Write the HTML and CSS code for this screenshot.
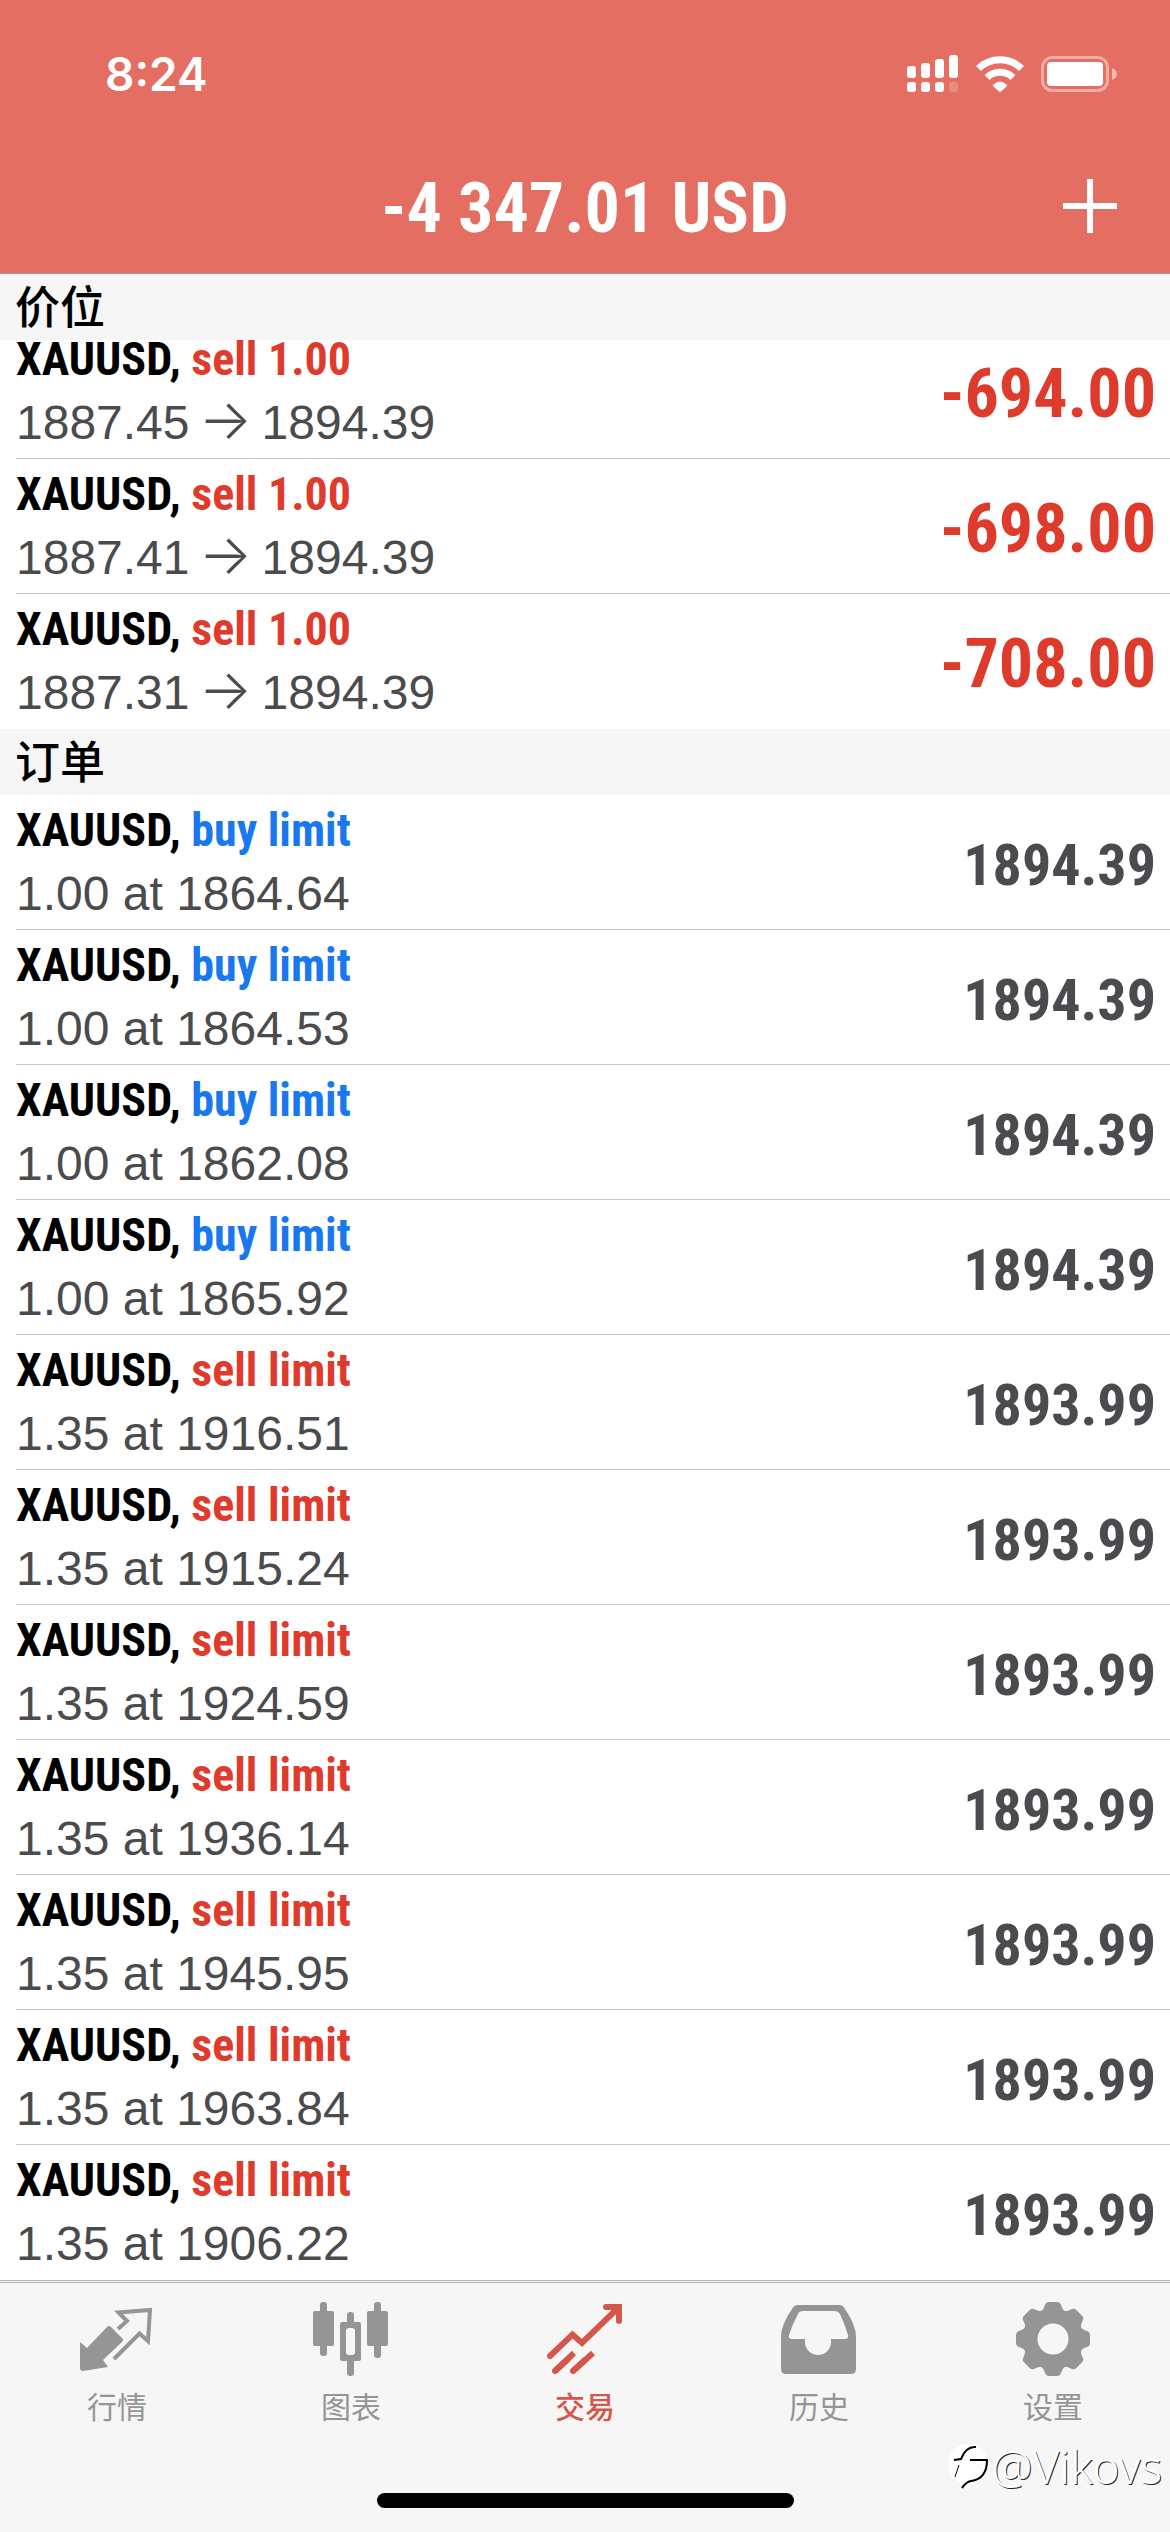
FILE: index.html
```html
<!DOCTYPE html>
<html lang="zh-CN">
<head>
<meta charset="utf-8">
<meta name="viewport" content="width=device-width">
<title>交易</title>
<link rel="stylesheet" href="styles.css">
</head>
<body>
<header class="top">
  <div class="status">
    <time class="clock">8:24</time>
    <div class="indicators">
      <svg class="signal" width="52" height="38" viewBox="0 0 52 38" fill="#fff" aria-hidden="true">
        <rect x="0" y="11" width="9" height="12" rx="3"/><rect x="14" y="8" width="9" height="15" rx="3"/><rect x="28" y="4" width="9" height="19" rx="3"/><rect x="42" y="0" width="9" height="23" rx="3"/>
        <rect x="0" y="27" width="9" height="10" rx="3"/><rect x="14" y="27" width="9" height="10" rx="3"/><rect x="28" y="27" width="9" height="10" rx="3"/><rect x="42" y="27" width="9" height="10" rx="3" opacity=".2"/>
      </svg>
      <svg class="wifi" width="50" height="38" viewBox="0 0 50 38" aria-hidden="true">
        <g fill="none" stroke="#fff" stroke-width="7"><path d="M3.500 13.500a31 31 0 0 1 43 0"/><path d="M12 22.500a19 19 0 0 1 26 0"/></g>
        <path fill="#fff" d="M18.500 29.500Q25 23.500 31.500 29.500Q32.500 30.500 31.500 31.500L26 36.500Q25 37.300 24 36.500L18.500 31.500Q17.500 30.500 18.500 29.500z"/>
      </svg>
      <svg class="battery" width="77" height="38" viewBox="0 0 77 38" aria-hidden="true">
        <rect x="1.500" y="2.500" width="65" height="33" rx="10" fill="none" stroke="#fff" stroke-width="3" opacity=".42"/>
        <rect x="6" y="7" width="56" height="24" rx="4" fill="#fff"/>
        <path d="M71 13q5 2 5 6t-5 6z" fill="#fff" opacity=".5"/>
      </svg>
    </div>
  </div>
  <div class="bar">
    <h1 class="balance">-4 347.01 USD</h1>
    <button class="add" type="button" aria-label="Add">
      <svg width="54" height="54" viewBox="0 0 54 54" stroke="#fff" stroke-width="6" aria-hidden="true"><path d="M27 0v54M0 27h54"/></svg>
    </button>
  </div>
</header>
<main class="content">
  <section>
    <h2 class="section-title">价位</h2>
    <ul class="list scrolled">
      <li class="row"><div class="order"><p class="name">XAUUSD, <span class="sell">sell 1.00</span></p><p class="detail">1887.45 <span class="arrow">→</span> 1894.39</p></div><strong class="profit">-694.00</strong></li>
      <li class="row"><div class="order"><p class="name">XAUUSD, <span class="sell">sell 1.00</span></p><p class="detail">1887.41 <span class="arrow">→</span> 1894.39</p></div><strong class="profit">-698.00</strong></li>
      <li class="row"><div class="order"><p class="name">XAUUSD, <span class="sell">sell 1.00</span></p><p class="detail">1887.31 <span class="arrow">→</span> 1894.39</p></div><strong class="profit">-708.00</strong></li>
    </ul>
  </section>
  <section>
    <h2 class="section-title">订单</h2>
    <ul class="list">
      <li class="row"><div class="order"><p class="name">XAUUSD, <span class="buy">buy limit</span></p><p class="detail">1.00 at 1864.64</p></div><strong class="price">1894.39</strong></li>
      <li class="row"><div class="order"><p class="name">XAUUSD, <span class="buy">buy limit</span></p><p class="detail">1.00 at 1864.53</p></div><strong class="price">1894.39</strong></li>
      <li class="row"><div class="order"><p class="name">XAUUSD, <span class="buy">buy limit</span></p><p class="detail">1.00 at 1862.08</p></div><strong class="price">1894.39</strong></li>
      <li class="row"><div class="order"><p class="name">XAUUSD, <span class="buy">buy limit</span></p><p class="detail">1.00 at 1865.92</p></div><strong class="price">1894.39</strong></li>
      <li class="row"><div class="order"><p class="name">XAUUSD, <span class="sell">sell limit</span></p><p class="detail">1.35 at 1916.51</p></div><strong class="price">1893.99</strong></li>
      <li class="row"><div class="order"><p class="name">XAUUSD, <span class="sell">sell limit</span></p><p class="detail">1.35 at 1915.24</p></div><strong class="price">1893.99</strong></li>
      <li class="row"><div class="order"><p class="name">XAUUSD, <span class="sell">sell limit</span></p><p class="detail">1.35 at 1924.59</p></div><strong class="price">1893.99</strong></li>
      <li class="row"><div class="order"><p class="name">XAUUSD, <span class="sell">sell limit</span></p><p class="detail">1.35 at 1936.14</p></div><strong class="price">1893.99</strong></li>
      <li class="row"><div class="order"><p class="name">XAUUSD, <span class="sell">sell limit</span></p><p class="detail">1.35 at 1945.95</p></div><strong class="price">1893.99</strong></li>
      <li class="row"><div class="order"><p class="name">XAUUSD, <span class="sell">sell limit</span></p><p class="detail">1.35 at 1963.84</p></div><strong class="price">1893.99</strong></li>
      <li class="row"><div class="order"><p class="name">XAUUSD, <span class="sell">sell limit</span></p><p class="detail">1.35 at 1906.22</p></div><strong class="price">1893.99</strong></li>
    </ul>
  </section>
</main>
<footer class="bottom">
  <nav class="tabs">
    <a class="tab" href="#quotes">
      <svg width="76" height="76" viewBox="0 0 76 76" aria-hidden="true">
        <path fill="currentColor" d="M1 41L8 47L28 26Q30 24 32 26L43 37Q45 39 43 41L24 59L29 66L4 70Q1 70 1 67z"/>
        <path fill="none" stroke="currentColor" stroke-width="4" d="M39 28L48 20L39.500 11.500L71 9L69 40L60.500 32.500L35 58"/>
      </svg>
      <span>行情</span>
    </a>
    <a class="tab" href="#chart">
      <svg width="76" height="76" viewBox="0 0 76 76" fill="currentColor" aria-hidden="true">
        <rect x="0" y="10" width="21" height="35" rx="2"/><rect x="7" y="1" width="7" height="54" rx="3"/>
        <path fill-rule="evenodd" d="M29 21h17q2 0 2 2v35q0 2-2 2H29q-2 0-2-2V23q0-2 2-2zM36 27q-3 0-3 3v21q0 3 3 3h3q3 0 3-3V30q0-3-3-3z"/>
        <path d="M34 22v-8q0-3 3.500-3t3.500 3v8zM34 59v13q0 3 3.500 3t3.500-3V59z"/>
        <rect x="54" y="10" width="21" height="35" rx="2"/><rect x="61" y="1" width="7" height="56" rx="3"/>
      </svg>
      <span>图表</span>
    </a>
    <a class="tab active" href="#trade" aria-current="page">
      <svg width="76" height="76" viewBox="0 0 76 76" fill="none" stroke="currentColor" stroke-width="6" stroke-linecap="round" aria-hidden="true">
        <path d="M3 55L25.500 33.500L35 42L71 7"/><path d="M59 6H72V20"/><path d="M8 70L27 52" stroke-linecap="butt"/><path d="M26 70L46 52" stroke-linecap="butt"/><path d="M8 70L20 59M26 70L38 59"/>
      </svg>
      <span>交易</span>
    </a>
    <a class="tab" href="#history">
      <svg width="76" height="76" viewBox="0 0 76 76" fill="currentColor" aria-hidden="true">
        <path fill-rule="evenodd" d="M17 4H58Q62 4 64 8Q75 24 75 36V68Q75 73 70 73H5Q0 73 0 68V36Q0 24 11 8Q13 4 17 4zM22 10Q18 10 17 13Q11 24 8 34Q7 38 11 38H24V41A13 13 0 0 0 50 41V38H64Q68 38 67 34Q64 24 59 13Q57 10 53 10z"/>
      </svg>
      <span>历史</span>
    </a>
    <a class="tab" href="#settings">
      <svg width="76" height="76" viewBox="0 0 76 76" fill="currentColor" aria-hidden="true">
        <circle cx="38" cy="38" r="23" fill="none" stroke="currentColor" stroke-width="15"/>
        <g id="teeth"><path id="tooth" d="M25 11Q28 10 30 4Q31 1 34 1H42Q45 1 46 4Q48 10 51 11L46 17H30z"/>
        <use href="#tooth" transform="rotate(45 38 38)"/><use href="#tooth" transform="rotate(90 38 38)"/><use href="#tooth" transform="rotate(135 38 38)"/></g>
        <use href="#teeth" transform="rotate(180 38 38)"/>
      </svg>
      <span>设置</span>
    </a>
  </nav>
  <div class="home"></div>
  <div class="watermark">
    <svg width="42" height="46" viewBox="0 0 42 46" aria-hidden="true">
      <circle cx="20" cy="21" r="20" fill="#fff"/>
      <g fill="none" stroke="#000" stroke-width="2"><path d="M6 17L13 16Q18 3 28 4"/><path d="M22 17H39Q39 36 23 38Q18 39 14 45"/><path d="M11 22L7 34" stroke-width="1"/></g>
    </svg>
    <span>@Vikovs</span>
  </div>
</footer>
</body>
</html>
```
FILE: styles.css
```css
* { box-sizing: border-box; }
body, h1, h2, p, ul { margin: 0; padding: 0; }
body {
  min-height: 100vh;
  display: flex;
  flex-direction: column;
  background: #fff;
  color: #000;
  font-family: "Liberation Sans", "Noto Sans CJK SC", sans-serif;
}

.top { background: #e56e62; color: #fff; border-bottom: 1px solid #b98c88; }
.status {
  display: flex;
  justify-content: space-between;
  align-items: center;
  padding: 44px 52px 0 105px;
}
.clock { font: 600 46px/60px Inter, sans-serif; }
.indicators { display: flex; align-items: center; gap: 16px; }
.bar { display: grid; grid-template-columns: 1fr auto 1fr; align-items: center; padding: 54px 53px 19px; }
.balance {
  grid-column: 2;
  padding-top: 4px;
  font: 700 70px/92px "Roboto Condensed", "Liberation Sans", sans-serif;
}
.add { justify-self: end; padding: 0; border: 0; background: none; display: flex; }

.content { flex: 1; }
.section-title {
  position: relative;
  z-index: 1;
  background: #f6f6f6;
  padding: 7px 15px 11px;
  font: 500 45px/48px "Noto Sans CJK SC", sans-serif;
}
.list { list-style: none; }
/* the list is scrolled a little way under its section title */
.scrolled { margin-top: -16px; }
.row {
  display: flex;
  justify-content: space-between;
  align-items: center;
  min-height: 135px;
  margin-left: 16px;
  padding-right: 14px;
  border-bottom: 1px solid #c4c4c6;
}
.row:last-child { border-bottom-color: transparent; }
.order { display: grid; gap: 16px; }
.name { font: 700 46px/48px "Roboto Condensed", "Liberation Sans", sans-serif; }
.detail { font-size: 48px; line-height: 48px; color: #4b4b4e; }
.arrow { margin: 0 -4px; font-family: Inter, "DejaVu Sans", sans-serif; font-size: 56px; font-weight: 300; line-height: 1px; }
.sell, .profit { color: #df3b2c; }
.buy { color: #1a78ee; }
.profit, .price { padding-top: 6px; }
.profit { font: 700 68px/80px "Roboto Condensed", "Liberation Sans", sans-serif; }
.price { font: 700 58px/80px "Roboto Condensed", "Liberation Sans", sans-serif; color: #4b4b4f; }

.bottom {
  position: relative;
  background: #f6f6f6;
  border-top: 3px double #b4b4b4;
  padding: 18px 0 24px;
}
.tabs { display: grid; grid-template-columns: repeat(5, 1fr); }
.tab {
  display: flex;
  flex-direction: column;
  align-items: center;
  gap: 6px;
  color: #959595;
  text-decoration: none;
  font: 400 30px/44px "Noto Sans CJK SC", sans-serif;
}
.active { color: #d6564b; font-weight: 500; }
.home { width: 417px; height: 15px; margin: 66px auto 0; border-radius: 8px; background: #000; }
.watermark {
  position: absolute;
  right: 8px;
  bottom: 40px;
  display: flex;
  align-items: center;
  gap: 2px;
  color: #fff;
  font: 300 46px/52px "Noto Sans", sans-serif;
  text-shadow: 1px 1px 0 #222;
}
```
